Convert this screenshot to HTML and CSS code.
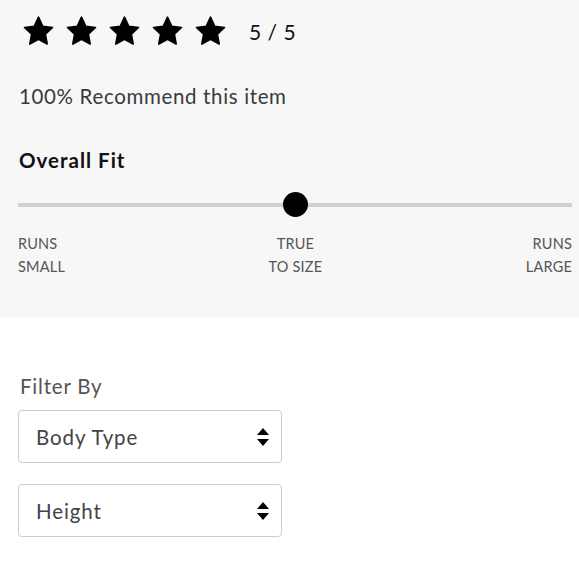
FILE: index.html
```html
<!DOCTYPE html>
<html>
<head>
<meta charset="utf-8">
<link rel="stylesheet" href="styles.css">
</head>
<body>
<section class="summary">
  <div class="rating">
    <div class="stars">
      <svg class="star" viewBox="0 0 24 24"><path d="M12 1.6l3.1 6.6 7.1.9-5.2 4.9 1.3 7.1L12 17.6l-6.3 3.5 1.3-7.1L1.8 9.1l7.1-.9z" stroke="#000" stroke-width="1.2" stroke-linejoin="round"/></svg>
      <svg class="star" viewBox="0 0 24 24"><path d="M12 1.6l3.1 6.6 7.1.9-5.2 4.9 1.3 7.1L12 17.6l-6.3 3.5 1.3-7.1L1.8 9.1l7.1-.9z" stroke="#000" stroke-width="1.2" stroke-linejoin="round"/></svg>
      <svg class="star" viewBox="0 0 24 24"><path d="M12 1.6l3.1 6.6 7.1.9-5.2 4.9 1.3 7.1L12 17.6l-6.3 3.5 1.3-7.1L1.8 9.1l7.1-.9z" stroke="#000" stroke-width="1.2" stroke-linejoin="round"/></svg>
      <svg class="star" viewBox="0 0 24 24"><path d="M12 1.6l3.1 6.6 7.1.9-5.2 4.9 1.3 7.1L12 17.6l-6.3 3.5 1.3-7.1L1.8 9.1l7.1-.9z" stroke="#000" stroke-width="1.2" stroke-linejoin="round"/></svg>
      <svg class="star" viewBox="0 0 24 24"><path d="M12 1.6l3.1 6.6 7.1.9-5.2 4.9 1.3 7.1L12 17.6l-6.3 3.5 1.3-7.1L1.8 9.1l7.1-.9z" stroke="#000" stroke-width="1.2" stroke-linejoin="round"/></svg>
    </div>
    <span class="score">5 / 5</span>
  </div>
  <p class="recommend">100% Recommend this item</p>
  <h3 class="fit-title">Overall Fit</h3>
  <div class="slider">
    <div class="track"></div>
    <div class="knob"></div>
  </div>
  <div class="fit-labels">
    <span class="lbl left">Runs<br>Small</span>
    <span class="lbl center">True<br>to size</span>
    <span class="lbl right">Runs<br>Large</span>
  </div>
</section>
<section class="filters">
  <div class="filter-title">Filter By</div>
  <div class="select">
    <span>Body Type</span>
    <svg class="arrows" viewBox="0 0 12 20"><path d="M6 1L12 8H0z M0 12H12L6 19z" fill="#000"/></svg>
  </div>
  <div class="select">
    <span>Height</span>
    <svg class="arrows" viewBox="0 0 12 20"><path d="M6 1L12 8H0z M0 12H12L6 19z" fill="#000"/></svg>
  </div>
</section>
</body>
</html>
```

FILE: styles.css
```css
* { box-sizing: border-box; }
html, body { margin: 0; padding: 0; }
body {
  background: #fff;
  font-family: Lato, "Open Sans", "Liberation Sans", sans-serif;
  color: #333;
  width: 579px;
}
.summary {
  background: #f7f7f7;
  height: 318px;
  padding: 15px 7px 0 19px;
}
.rating {
  display: flex;
  align-items: center;
  margin-left: 3px;
  height: 33px;
}
.stars {
  display: flex;
  gap: 10px;
}
.star {
  width: 33px;
  height: 33px;
  display: block;
}
.score {
  margin-left: 22px;
  font-size: 21px;
  color: #111;
  letter-spacing: 0.5px;
}
.recommend {
  margin: 36px 0 0;
  font-size: 20.5px;
  line-height: 24px;
  color: #3a3a3a;
  letter-spacing: 0.65px;
}
.fit-title {
  margin: 40px 0 0;
  font-size: 20.5px;
  font-weight: 700;
  line-height: 24px;
  color: #111;
  letter-spacing: 1px;
}
.slider {
  position: relative;
  height: 26px;
  margin-top: 20px;
  margin-left: -1px;
  display: flex;
  align-items: center;
  justify-content: center;
}
.track {
  flex: 1;
  height: 4px;
  background: #d0d0d0;
}
.knob {
  position: absolute;
  left: 50%;
  top: 0;
  width: 25px;
  height: 25px;
  margin-left: -12px;
  border-radius: 50%;
  background: #000;
}
.fit-labels {
  display: flex;
  justify-content: space-between;
  margin-top: 14px;
  margin-left: -1px;
}
.lbl {
  font-size: 14.5px;
  line-height: 23px;
  color: #555;
  text-transform: uppercase;
  letter-spacing: 0.2px;
}
.lbl.center { text-align: center; }
.lbl.right { text-align: right; }
.filters {
  padding: 56px 19px 0 18px;
}
.filter-title {
  font-size: 20.5px;
  line-height: 24px;
  color: #555;
  margin-left: 2px;
  letter-spacing: 0.8px;
}
.select {
  width: 264px;
  height: 53px;
  border: 1.5px solid #ccc;
  border-radius: 4px;
  background: #fff;
  display: flex;
  align-items: center;
  justify-content: space-between;
  padding: 0 12px 0 17px;
  margin-top: 12px;
  font-size: 20.5px;
  color: #444;
  letter-spacing: 0.9px;
}
.select + .select { margin-top: 21px; }
.arrows {
  width: 12px;
  height: 20px;
  display: block;
}
```
